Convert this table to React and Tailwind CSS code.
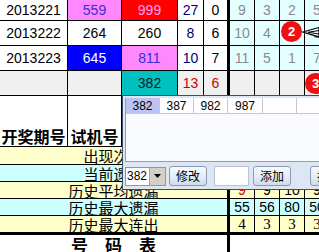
import React from "react";

const base = "shrink-0 h-full flex items-center justify-center border-r border-black";
const W1 = "w-[68px]";
const W2 = "w-[54px]";
const W3 = "w-[56px]";
const W4 = "w-[26px]";
const W5 = "w-[26px] border-r-[3px]";
const WR = "w-[25px]";

function Cell({ w, cls = "", children }) {
  return <div className={`${base} ${w} ${cls}`}>{children}</div>;
}

function TopRow({ h, cells, right, rightCls }) {
  return (
    <div className={`flex shrink-0 border-b border-black ${h}`}>
      <Cell w={W1} cls={cells[0].c}>{cells[0].t}</Cell>
      <Cell w={W2} cls={cells[1].c}>{cells[1].t}</Cell>
      <Cell w={W3} cls={cells[2].c}>{cells[2].t}</Cell>
      <Cell w={W4} cls={cells[3].c}>{cells[3].t}</Cell>
      <Cell w={W5} cls={cells[4].c}>{cells[4].t}</Cell>
      {right.map((r, i) => (
        <Cell key={i} w={WR} cls={rightCls}>{r}</Cell>
      ))}
    </div>
  );
}

function LabelRow({ h, bg, label, right, rightCls = "", bb = "border-b" }) {
  return (
    <div className={`flex shrink-0 border-black ${bb} ${h} ${bg}`}>
      <div className={`${base} w-[230px] border-r-[3px] text-[15px] font-['Noto_Sans_CJK_SC',sans-serif]`}>{label}</div>
      {right.map((r, i) => (
        <Cell key={i} w={WR} cls={rightCls}>{r}</Cell>
      ))}
    </div>
  );
}

function Btn({ children, w = "w-[38px]" }) {
  return (
    <div className={`${w} h-[20px] shrink-0 rounded-[3px] border border-[#8a9ab3] bg-gradient-to-b from-[#f7fafe] via-[#e6eef8] to-[#cfdcec] flex items-center justify-center text-[12px] text-black font-['Noto_Sans_CJK_SC',sans-serif]`}>
      {children}
    </div>
  );
}

export default function App() {
  const violet = "bg-[#ff88ff] text-[#3a2ccf]";
  const navy = "text-[#000080]";
  const gray = "bg-[#f0f0f0]";
  const rc = "bg-[#e4ffff] text-[#8a8a8a]";
  return (
    <div className="relative w-[319px] h-[252px] overflow-hidden bg-white text-black text-[14px] leading-none font-['Liberation_Sans','Noto_Sans_CJK_SC',sans-serif]">
      <div className="flex flex-col">
        <TopRow
          h="h-[21px]"
          cells={[
            { t: "2013221" },
            { t: "559", c: violet },
            { t: "999", c: "bg-[#ff0000] text-[#ff9cff]" },
            { t: "27", c: navy },
            { t: "0" },
          ]}
          right={["9", "3", "2", "5"]}
          rightCls={rc}
        />
        <TopRow
          h="h-[25px]"
          cells={[
            { t: "2013222" },
            { t: "264" },
            { t: "260" },
            { t: "8", c: navy },
            { t: "6" },
          ]}
          right={["10", "4", "", "5"]}
          rightCls={rc}
        />
        <TopRow
          h="h-[25px]"
          cells={[
            { t: "2013223" },
            { t: "645", c: "bg-[#0000ff] text-white" },
            { t: "811", c: violet },
            { t: "10", c: navy },
            { t: "7" },
          ]}
          right={["11", "5", "1", "7"]}
          rightCls={rc}
        />
        <TopRow
          h="h-[25px]"
          cells={[
            { t: "", c: gray },
            { t: "", c: gray },
            { t: "382", c: "bg-[#00c0c0] text-[#102020]" },
            { t: "13", c: `${gray} text-[#d00000]` },
            { t: "6", c: `${gray} text-[#d00000]` },
          ]}
          right={["", "", "", ""]}
          rightCls={gray}
        />
        {/* header row */}
        <div className="flex shrink-0 h-[51px] border-b border-black">
          <div className={`${base} ${W1} items-end pb-[2px] text-[16px] font-bold font-['Noto_Sans_CJK_SC',sans-serif]`}>开奖期号</div>
          <div className={`${base} ${W2} items-end pb-[2px] text-[16px] font-bold font-['Noto_Sans_CJK_SC',sans-serif]`}>试机号</div>
          <Cell w={W3} />
          <Cell w={W4} />
          <Cell w={W5} />
          <Cell w={WR} />
          <Cell w={WR} />
          <Cell w={WR} />
          <Cell w={WR} />
        </div>
        <LabelRow h="h-[18px]" bg="bg-[#ffffcc]" label="出现次数" right={["", "", "", ""]} />
        <LabelRow h="h-[17px]" bg="bg-[#ccffff]" label="当前遗漏" right={["", "", "", ""]} />
        <div className="flex shrink-0 border-b border-black h-[17px] bg-[#ffffcc]">
          <div className={`${base} w-[230px] border-r-[3px] text-[15px] font-['Noto_Sans_CJK_SC',sans-serif]`}>历史平均遗漏</div>
          <Cell w={WR} cls="text-[#e00000]">9</Cell>
          <Cell w={WR}>9</Cell>
          <Cell w={WR}>10</Cell>
          <Cell w={WR}>9</Cell>
        </div>
        <LabelRow h="h-[17px]" bg="bg-[#ccffff]" label="历史最大遗漏" right={["55", "56", "80", "50"]} />
        <LabelRow
          h="h-[19px]"
          bb="border-b-[3px]"
          bg="bg-[#ffffcc]"
          label="历史最大连出"
          right={["4", "3", "3", "3"]}
          rightCls="font-['Liberation_Serif',serif] text-[15px]"
        />
        <div className="flex shrink-0 h-[18px]">
          <div className={`${base} w-[230px] border-r-[3px] gap-[17px] text-[17px] font-bold font-['Noto_Sans_CJK_SC',sans-serif]`}>
            <span>号</span>
            <span>码</span>
            <span>表</span>
          </div>
        </div>
      </div>

      {/* red circles and connector */}
      <div className="absolute left-[281px] top-[21px] w-[21px] h-[21px] rounded-full bg-[#ee1111] text-white font-bold text-[13px] flex items-center justify-center">2</div>
      <svg className="absolute left-[300px] top-[24px]" width="19" height="16" viewBox="0 0 19 16">
        <polygon points="19,3.5 3,8 19,13" fill="#f4ffff" stroke="#000" strokeWidth="1.2" />
        <polyline points="19,6.5 8,8.3 19,10" fill="none" stroke="#000" strokeWidth="1" />
      </svg>
      <div className="absolute left-[305px] top-[73px] w-[21px] h-[21px] rounded-full bg-[#ee1111] text-white font-bold text-[13px] flex items-center justify-center pr-[6px]">
        <span className="pl-[6px]">3</span>
      </div>

      {/* dialog */}
      <div className="absolute left-[122px] top-[95px] w-[215px] h-[95px] border border-[#3d4d70] bg-[#dde7f4] p-[2px] flex flex-col">
        <div className="h-[64px] shrink-0 bg-[#f8fafd] border-l border-b border-[#8f9db6] flex flex-col">
          <div className="flex h-[16px] shrink-0 text-[12px]">
            <div className="w-[34px] shrink-0 h-full flex items-center justify-center bg-[#bcc3f3] border-r border-b border-[#c8c8c8]">382</div>
            <div className="w-[34px] shrink-0 h-full flex items-center justify-center bg-white border-r border-b border-[#c8c8c8]">387</div>
            <div className="w-[34px] shrink-0 h-full flex items-center justify-center bg-white border-r border-b border-[#c8c8c8]">982</div>
            <div className="w-[35px] shrink-0 h-full flex items-center justify-center bg-white border-r border-b border-[#c8c8c8]">987</div>
            <div className="w-[34px] shrink-0 h-full bg-white border-r border-b border-[#c8c8c8]"></div>
            <div className="w-[34px] shrink-0 h-full bg-white border-r border-b border-[#c8c8c8]"></div>
          </div>
        </div>
        <div className="flex items-center mt-[4px] h-[20px]">
          <div className="flex h-[19px] w-[41px] shrink-0 border border-[#7f9db9] bg-white">
            <div className="w-[23px] h-full flex items-center pl-[1px] text-[12px]">382</div>
            <div className="w-[16px] h-full bg-[#d4d0c8] border-l border-[#a0a0a0] flex items-center justify-center">
              <svg width="7" height="4" viewBox="0 0 7 4"><polygon points="0,0 7,0 3.5,4" fill="#000" /></svg>
            </div>
          </div>
          <div className="ml-[3px]"><Btn>修改</Btn></div>
          <div className="ml-[7px] w-[35px] h-[20px] shrink-0 bg-white border border-[#b7c3d6]"></div>
          <div className="ml-[4px]"><Btn>添加</Btn></div>
          <div className="ml-[19px]"><Btn>排序</Btn></div>
        </div>
      </div>
    </div>
  );
}
